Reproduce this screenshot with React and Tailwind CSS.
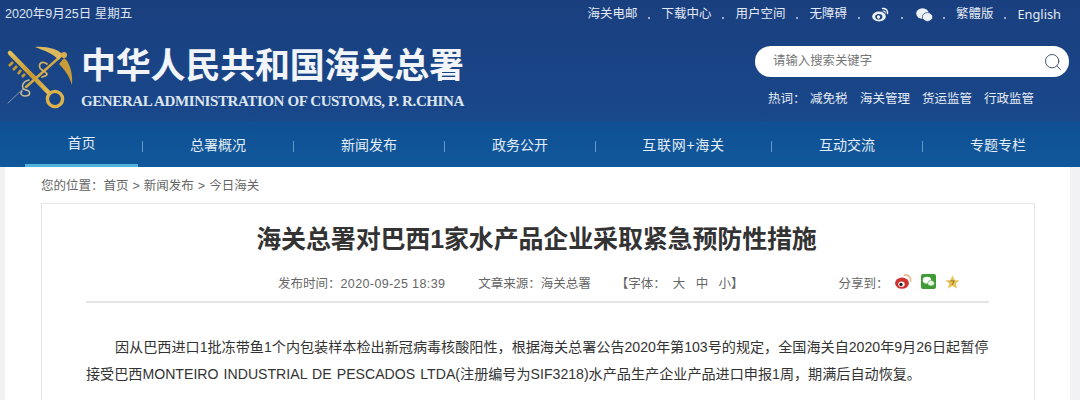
import { Search } from 'lucide-react';

const CJK = 'font-["Liberation_Sans","Noto_Sans_CJK_SC",sans-serif]';

const NAV = [
  { label: '总署概况', width: 'w-[151px]' },
  { label: '新闻发布', width: 'w-[151px]' },
  { label: '政务公开', width: 'w-[151px]' },
  { label: '互联网+海关', width: 'w-[176px]', spacing: 'tracking-[0.7px]' },
  { label: '互动交流', width: 'w-[151px]' },
  { label: '专题专栏', width: 'w-[151px]' },
];

function CustomsEmblem() {
  return (
    <svg width="70" height="68" viewBox="0 0 70 68" fill="none" className="shrink-0">
      <defs>
        <linearGradient id="gold" x1="0" y1="0" x2="1" y2="1">
          <stop offset="0" stopColor="#e3bf5c" />
          <stop offset="0.55" stopColor="#c8982f" />
          <stop offset="1" stopColor="#e2bd5a" />
        </linearGradient>
      </defs>
      {/* staff */}
      <path d="M20 44 L4 59" stroke="#8794a8" strokeWidth="1" strokeLinecap="round" />
      <path d="M58 11 L22 43" stroke="#d2a944" strokeWidth="2.4" strokeLinecap="round" />
      {/* snakes */}
      <path d="M43 20 C36 15 33 23 38 26 C43 29 46 31 38 33" stroke="#d6b15a" strokeWidth="1.8" strokeLinecap="round" />
      <path d="M25 36 C17 38 17 45 22 46 C27 47 27 52 21 52 C17 52 16 49 18 47" stroke="#c9bd92" strokeWidth="1.5" strokeLinecap="round" />
      {/* wings */}
      <path d="M31 3 C42 2 54 5 58 10 L55 16 C49 10 42 7 31 3 Z" fill="#dcb95f" />
      <path d="M60 14 C66 18 69 30 68 41 C65 31 60 25 55 20 Z" fill="#c99c39" />
      <circle cx="60" cy="11" r="3" fill="#d8ae4a" />
      {/* key */}
      <path d="M6 9 L45 49" stroke="url(#gold)" strokeWidth="4.6" strokeLinecap="round" />
      <path d="M9 18 L5 22 M13 22 L9 26 M17 26 L14 30 M21 30 L18 33" stroke="#c89a33" strokeWidth="2.6" />
      <circle cx="51" cy="55" r="7.6" stroke="#dcb24a" strokeWidth="3.4" />
    </svg>
  );
}

function WeiboIcon({ light }) {
  if (light) {
    return (
      <svg width="17" height="15" viewBox="0 0 17 15" fill="none">
        <ellipse cx="7" cy="9.5" rx="6.8" ry="5" fill="#eef3f8" />
        <ellipse cx="6.8" cy="9.8" rx="3.6" ry="2.8" fill="#1b4180" />
        <circle cx="6.5" cy="10" r="1.7" fill="#eef3f8" />
        <path d="M10.5 1.5 C14 1 16 3.5 15.5 6.5" stroke="#eef3f8" strokeWidth="1.5" strokeLinecap="round" />
        <path d="M11 4 C12.5 3.8 13.5 4.8 13.2 6" stroke="#eef3f8" strokeWidth="1.1" strokeLinecap="round" />
      </svg>
    );
  }
  return (
    <svg width="17" height="15" viewBox="0 0 17 15" fill="none">
      <ellipse cx="7" cy="9.2" rx="6.9" ry="5.6" fill="#cf3030" />
      <ellipse cx="6.5" cy="10.2" rx="3.2" ry="2.6" fill="#fff" />
      <circle cx="6" cy="10.4" r="1.7" fill="#2a2222" />
      <path d="M9.5 1 C13.5 0.5 16 3.5 15.5 7" stroke="#e9c3a0" strokeWidth="2" strokeLinecap="round" />
    </svg>
  );
}

function WechatWhite() {
  return (
    <svg width="17" height="14" viewBox="0 0 17 14">
      <ellipse cx="6.5" cy="5.5" rx="6.3" ry="5.2" fill="#eef3f8" />
      <ellipse cx="11.5" cy="9" rx="5.2" ry="4.4" fill="#eef3f8" stroke="#1b4180" strokeWidth="0.7" />
    </svg>
  );
}

function WechatGreen() {
  return (
    <svg width="15" height="15" viewBox="0 0 15 15">
      <rect width="15" height="15" rx="2" fill="#3f9c35" />
      <ellipse cx="6" cy="6.2" rx="4.2" ry="3.4" fill="#fff" />
      <ellipse cx="10" cy="9.2" rx="3.3" ry="2.7" fill="#eef7ec" stroke="#3f9c35" strokeWidth="0.5" />
    </svg>
  );
}

function StarIcon() {
  return (
    <svg width="15" height="14" viewBox="0 0 15 14">
      <path d="M7.5 0.5 L9.6 5 L14.5 5.4 L10.8 8.6 L12 13.5 L7.5 10.9 L3 13.5 L4.2 8.6 L0.5 5.4 L5.4 5 Z" fill="#e8c25a" />
      <path d="M5.5 6 H9.2 L7 9.8" stroke="#8d6d1f" strokeWidth="1" fill="none" />
    </svg>
  );
}

function Dot({ className }) {
  return (
    <span className={`flex ${className}`}>
      <span className="w-[2px] h-[2px] mt-[7px] rounded-full bg-[#c6d3e6]" />
    </span>
  );
}

function Separator() {
  return <span className="w-px h-[11px] mt-[4px] bg-[#5f9bc9]" />;
}

export default function App() {
  return (
    <div className={`w-[1080px] h-[400px] overflow-hidden bg-[#f2f2f4] ${CJK}`}>
      {/* header */}
      <div className="h-[122px] bg-gradient-to-b from-[#1a3f7f] to-[#19488b] flex flex-col">
        <div className="h-[28px] flex items-center pl-[5px] pr-[19px] text-[12.5px] text-[#dde5f0]">
          <span>2020年9月25日 星期五</span>
          <div className="flex-1" />
          <div className="flex items-center mt-[1px] text-[12.5px] text-[#e3eaf4]">
            <span>海关电邮</span>
            <Dot className="mx-[11px]" />
            <span>下载中心</span>
            <Dot className="mx-[11px]" />
            <span>用户空间</span>
            <Dot className="mx-[11px]" />
            <span>无障碍</span>
            <Dot className="mx-[11.5px]" />
            <WeiboIcon light />
            <Dot className="mx-[12.5px]" />
            <WechatWhite />
            <Dot className="mx-[10.5px]" />
            <span>繁體版</span>
            <Dot className="mx-[11px]" />
            <span className='font-["Noto_Sans",sans-serif] text-[12.8px]'>English</span>
          </div>
        </div>
        <div className="flex flex-1">
          <div className="flex pl-[4px] pt-[16px] gap-[7px]">
            <CustomsEmblem />
            <div className="flex flex-col">
              <div className='text-[35px] leading-[40px] -mt-[1px] font-bold text-[#f1f4f8] tracking-[-0.2px] whitespace-nowrap font-["Noto_Sans_CJK_SC",serif]'>
                中华人民共和国海关总署
              </div>
              <div className='mt-[9px] text-[15px] leading-[18px] font-bold text-[#dde5ef] tracking-[-0.4px] whitespace-nowrap font-["Liberation_Serif",serif]'>
                GENERAL ADMINISTRATION OF CUSTOMS, P. R.CHINA
              </div>
            </div>
          </div>
          <div className="flex-1" />
          <div className="w-[325px] pr-[11px] pt-[18px] flex flex-col">
            <div className="h-[31px] rounded-full bg-white flex items-center pl-[18px] pr-[6px] text-[12.4px] text-[#777]">
              <span>请输入搜索关键字</span>
              <div className="flex-1" />
              <Search size={20} strokeWidth={1.2} color="#44566b" />
            </div>
            <div className="mt-[14px] pl-[13px] flex text-[12.5px] leading-[17px] text-[#e6ecf5]">
              <span className="w-[42px]">热词：</span>
              <span className="w-[50px]">减免税</span>
              <span className="w-[62px]">海关管理</span>
              <span className="w-[62px]">货运监管</span>
              <span>行政监管</span>
            </div>
          </div>
        </div>
      </div>

      {/* nav */}
      <div className="h-[45px] bg-gradient-to-b from-[#0f5093] to-[#10589b] flex text-[14px] text-[#e3edf6]">
        <div className="ml-[25px] w-[113px] h-full flex items-center justify-center border-b-[3px] border-[#4fb3dc]">
          <span className="mt-[1px]">首页</span>
        </div>
        <div className="w-[4px]" />
        {NAV.map(({ label, width, spacing }) => (
          <div key={label} className={`${width} flex items-center`}>
            <Separator />
            <span className={`flex-1 text-center mt-[2px] ${spacing || ''}`}>{label}</span>
          </div>
        ))}
      </div>

      {/* body */}
      <div className="ml-[5px] mr-[10px] pl-[36px] pr-[35px] h-[233px] bg-white">
        <div className="h-[36px] flex items-center pt-[2px] text-[12.5px] text-[#666]">
          您的位置：<span>首页</span>
          <span className="mx-[4px]">&gt;</span>新闻发布
          <span className="mx-[4px]">&gt;</span>今日海关
        </div>
        <div className="h-[220px] border border-[#e6e6e6] pl-[44px] pr-[45px]">
          <h1 className="pt-[17px] pr-[2px] text-center text-[25px] leading-[36px] font-bold text-[#333] tracking-[-0.15px]">
            海关总署对巴西1家水产品企业采取紧急预防性措施
          </h1>
          <div className="mt-[14px] h-[32px] border-b-2 border-[#e4e4e4] flex items-start pt-[4px] text-[12.5px] leading-[18px] text-[#666] whitespace-nowrap">
            <span className="ml-[192px]">发布时间：<span className="tracking-[0.38px]">2020-09-25 18:39</span></span>
            <span className="ml-[33px]">文章来源：海关总署</span>
            <span className="ml-[25px]">【字体：&nbsp; 大&nbsp;&nbsp; 中&nbsp;&nbsp; 小】</span>
            <span className="ml-[95px]">分享到：</span>
            <span className="ml-[6.5px] flex items-center gap-[9px] -mt-[1px]">
              <WeiboIcon />
              <WechatGreen />
              <StarIcon />
            </span>
          </div>
          <p className="mt-[31px] -mr-[4px] text-[14.12px] leading-[27px] text-[#333] indent-[29px] [word-spacing:1.2px]">
            因从巴西进口1批冻带鱼1个内包装样本检出新冠病毒核酸阳性，根据海关总署公告2020年第103号的规定，全国海关自2020年9月26日起暂停接受巴西MONTEIRO INDUSTRIAL DE PESCADOS LTDA(注册编号为SIF3218)水产品生产企业产品进口申报1周，期满后自动恢复。
          </p>
        </div>
      </div>
    </div>
  );
}
